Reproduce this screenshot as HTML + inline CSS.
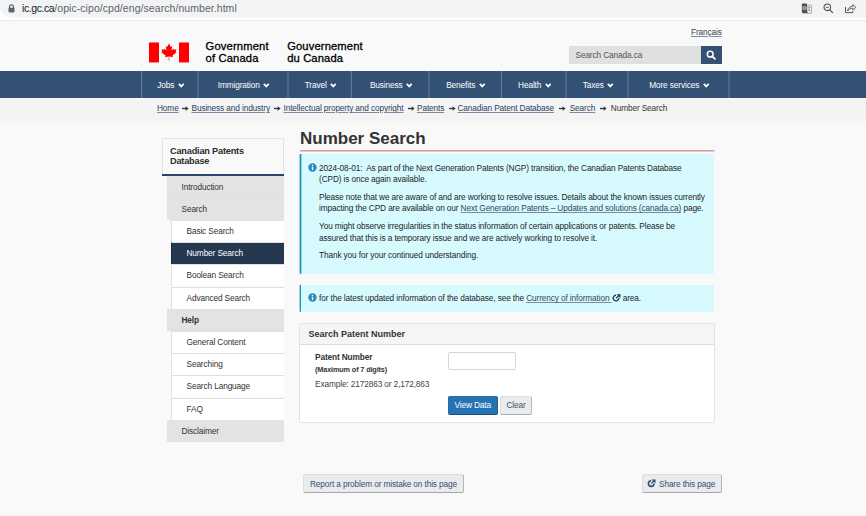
<!DOCTYPE html>
<html><head><meta charset="utf-8">
<style>
*{box-sizing:border-box;margin:0;padding:0}
html,body{width:866px;height:516px;overflow:hidden;background:#f9f9f9;font-family:"Liberation Sans",sans-serif;color:#333}
.a{position:absolute;white-space:nowrap}
#bar{position:absolute;left:0;top:0;width:866px;height:20px;background:#fff}
#pill{position:absolute;left:-1px;top:-12px;width:900px;height:29px;box-shadow:0 1px 0 #f8f9f9;border-radius:15px;background:#f1f3f4}
#barline{position:absolute;left:0;top:20px;width:866px;height:1px;background:#e8eaea}
#url{left:22px;top:1px;font-size:10.5px;line-height:14px;color:#5f6368}
#url b{font-weight:400;color:#202124;letter-spacing:-0.42px}#url i{font-style:normal;letter-spacing:0.06px}
#hdr{position:absolute;left:0;top:21px;width:866px;height:50px;background:#f9f9f9}
#nav{position:absolute;left:0;top:71px;width:866px;height:27px;background:#335075}
.sep{position:absolute;top:71px;width:1px;height:27px;background:#7d8ca0}
.ni{position:absolute;top:72px;height:27px;line-height:27px;padding-left:1.4px;font-size:8.3px;letter-spacing:-0.13px;color:#fff;text-align:center}
.chev{display:inline-block;width:6.5px;height:4.6px;margin-left:3.5px;vertical-align:0.5px}
#bc{position:absolute;left:0;top:99px;width:866px;height:22px;background:#f4f4f4}
.bcl{font-size:8.3px;letter-spacing:-0.13px;color:#284162;text-decoration:underline;text-decoration-color:#7d8ba0;top:103.2px;line-height:10px}
.arr{font-size:8.3px;letter-spacing:-0.13px;top:103px;line-height:10px;color:#333}
#side{position:absolute;left:162px;top:138px;width:122.2px;height:36px;background:#f9f9f9;border:1px solid #e3e3e3;border-bottom:none}
#sideb{position:absolute;left:162px;top:173.7px;width:122.2px;height:2.2px;background:#284570}
.row{position:absolute;height:22.2px;line-height:23px;font-size:8.3px;letter-spacing:-0.13px;color:#333;padding-left:0}
.g{left:167px;width:117px;background:#e3e3e3}
.w{left:171px;width:113px;line-height:21.5px;background:#fff;border-left:1px solid #e2e2e2;border-top:1px solid #e0e0e0}
.sel{background:#24384f;color:#fff;border-color:#1c2a3b;border-top-color:#e0e0e0}
.alert{position:absolute;left:301px;width:413.3px;background:#d7faff}
.at{position:absolute;left:319px;font-size:8.3px;letter-spacing:-0.13px;line-height:11.5px;color:#1e1e1e;white-space:nowrap}
.icon{position:absolute;width:8px;height:8px;border-radius:50%;background:#2a8bbd}
.lnk{color:#34465e;text-decoration:underline;text-decoration-color:#7d8ba0}
#panel{position:absolute;left:299px;top:323px;width:416px;height:100px;background:#fff;border:1px solid #e3e3e3;border-radius:2px}
#ph{position:absolute;left:0;top:0;width:414px;height:21px;background:#f5f5f5;border-bottom:1px solid #ddd}
.btn{position:absolute;font-size:8.3px;letter-spacing:-0.13px;text-align:center;border-radius:2px}
</style></head><body>
<div id="bar"></div><div id="pill"></div><div id="barline"></div>
<svg class="a" style="left:8px;top:4px" width="7" height="9" viewBox="0 0 7 9"><path d="M1.5 4V2.8a2 2 0 0 1 4 0V4" fill="none" stroke="#5f6368" stroke-width="1.2"/><rect x="0.5" y="3.8" width="6" height="4.6" rx="0.8" fill="#5f6368"/></svg>
<div id="url" class="a"><b>ic.gc.ca</b><i>/opic-cipo/cpd/eng/search/number.html</i></div>
<!-- toolbar icons -->
<svg class="a" style="left:798px;top:1px" width="18" height="15" viewBox="0 0 18 15"><rect x="8.9" y="4.2" width="4.6" height="8.2" rx="0.8" fill="#f4f4f4" stroke="#9a9a9a" stroke-width="0.8"/><path d="M9.9 6.2h2.6M11.2 6.2c0 2.1-.5 3.4-1.6 4.3M10.4 8c.6 1.1 1.4 1.9 2.2 2.4" fill="none" stroke="#808080" stroke-width="0.75"/><path d="M4.9 2.6h3.1a1 1 0 0 1 1 1v7.1l.9 1.5H4.9a1 1 0 0 1-1-1V3.6a1 1 0 0 1 1-1z" fill="#505050"/><circle cx="6.5" cy="7" r="1.6" fill="none" stroke="#e8e8e8" stroke-width="0.8"/><path d="M6.6 7h1.5" stroke="#e8e8e8" stroke-width="0.7"/></svg>
<svg class="a" style="left:822px;top:2px" width="13" height="13" viewBox="0 0 13 13"><circle cx="5.3" cy="5.3" r="3.3" fill="none" stroke="#4a4a4a" stroke-width="1.05"/><path d="M3.9 5.3h2.8" stroke="#4a4a4a" stroke-width="0.9"/><path d="M7.8 7.8l3 3" stroke="#4a4a4a" stroke-width="1.2"/></svg>
<svg class="a" style="left:844px;top:2px" width="13" height="13" viewBox="0 0 13 13"><path d="M1.5 5v5.6h7.3V9.2" fill="none" stroke="#555" stroke-width="1"/><path d="M3.6 9c.3-3.2 2.4-4.6 5.2-4.6V2.6l3 2.7-3 2.8V6.3c-2.2 0-3.9.8-5.2 2.7z" fill="none" stroke="#555" stroke-width="0.9" stroke-linejoin="round"/></svg>

<div id="hdr"></div>
<a class="a lnk" style="left:691px;top:27px;font-size:8.3px;letter-spacing:-0.13px;line-height:10px">Français</a>
<!-- flag -->
<svg class="a" style="left:149px;top:42px" width="40" height="21" viewBox="0 -0.45 40 21"><rect x="0" y="0" width="10" height="20" fill="#f00"/><rect x="30" y="0" width="10" height="20" fill="#f00"/><path fill="#f00" transform="translate(20 9.5) scale(0.00417)" d="M-90 2030L-45 1165Q-45 1120-95 1120L-959 1273L-826 908Q-816 880-836 874L-1845 85L-1618-32Q-1590-45-1602-70L-1795-644L-1226-527Q-1200-525-1194-547L-1081-821L-638-330Q-600-310-586-353L-786-1419L-455-1217Q-425-1200-412-1230L0-2000L412-1230Q425-1200 455-1217L786-1419L586-353Q600-310 638-330L1081-821L1194-547Q1200-525 1226-527L1795-644L1602-70Q1590-45 1618-32L1845 85L836 874Q816 880 826 908L959 1273L95 1120Q45 1120 45 1165L90 2030z"/></svg>
<div class="a" style="left:205.6px;top:41.3px;font-size:11.2px;line-height:11.3px;color:#000;letter-spacing:0.15px;-webkit-text-stroke:0.3px #000">Government<br>of Canada</div>
<div class="a" style="left:287.2px;top:41.3px;font-size:11.2px;line-height:11.3px;color:#000;letter-spacing:0.13px;-webkit-text-stroke:0.3px #000">Gouvernement<br>du Canada</div>
<!-- search -->
<div class="a" style="left:569px;top:45.5px;width:131.5px;height:18.5px;background:#e0e0e0"></div>
<div class="a" style="left:575.5px;top:50px;font-size:8.3px;letter-spacing:-0.13px;line-height:10px;color:#555">Search Canada.ca</div>
<div class="a" style="left:700.5px;top:45.5px;width:21.5px;height:18.5px;background:#335075"></div>
<svg class="a" style="left:706px;top:50px" width="10" height="10" viewBox="0 0 10 10"><circle cx="4.2" cy="4.2" r="2.9" fill="none" stroke="#fff" stroke-width="1.5"/><path d="M6.3 6.3l2.6 2.6" stroke="#fff" stroke-width="1.8" stroke-linecap="round"/></svg>

<!-- nav -->
<div id="nav"></div>
<svg class="a" style="left:0;top:71px" width="866" height="27"><rect x="141.16" y="0" width="1" height="27" fill="#6e7d93"/><rect x="197.50" y="0" width="1" height="27" fill="#6e7d93"/><rect x="287.50" y="0" width="1" height="27" fill="#6e7d93"/><rect x="350.83" y="0" width="1" height="27" fill="#6e7d93"/><rect x="428.50" y="0" width="1" height="27" fill="#6e7d93"/><rect x="500.93" y="0" width="1" height="27" fill="#6e7d93"/><rect x="565.60" y="0" width="1" height="27" fill="#6e7d93"/><rect x="627.40" y="0" width="1" height="27" fill="#6e7d93"/><rect x="728.50" y="0" width="1" height="27" fill="#6e7d93"/></svg>
<div class="ni" style="left:142px;width:56px">Jobs<svg class="chev" viewBox="0 0 6.5 4.6"><path d="M.8.8L3.25 3.4 5.7.8" fill="none" stroke="#fff" stroke-width="1.7"/></svg></div>
<div class="ni" style="left:198px;width:90px">Immigration<svg class="chev" viewBox="0 0 6.5 4.6"><path d="M.8.8L3.25 3.4 5.7.8" fill="none" stroke="#fff" stroke-width="1.7"/></svg></div>
<div class="ni" style="left:288px;width:64px">Travel<svg class="chev" viewBox="0 0 6.5 4.6"><path d="M.8.8L3.25 3.4 5.7.8" fill="none" stroke="#fff" stroke-width="1.7"/></svg></div>
<div class="ni" style="left:352px;width:77px">Business<svg class="chev" viewBox="0 0 6.5 4.6"><path d="M.8.8L3.25 3.4 5.7.8" fill="none" stroke="#fff" stroke-width="1.7"/></svg></div>
<div class="ni" style="left:429px;width:72px">Benefits<svg class="chev" viewBox="0 0 6.5 4.6"><path d="M.8.8L3.25 3.4 5.7.8" fill="none" stroke="#fff" stroke-width="1.7"/></svg></div>
<div class="ni" style="left:501px;width:66px">Health<svg class="chev" viewBox="0 0 6.5 4.6"><path d="M.8.8L3.25 3.4 5.7.8" fill="none" stroke="#fff" stroke-width="1.7"/></svg></div>
<div class="ni" style="left:567px;width:61px">Taxes<svg class="chev" viewBox="0 0 6.5 4.6"><path d="M.8.8L3.25 3.4 5.7.8" fill="none" stroke="#fff" stroke-width="1.7"/></svg></div>
<div class="ni" style="left:628px;width:101px">More services<svg class="chev" viewBox="0 0 6.5 4.6"><path d="M.8.8L3.25 3.4 5.7.8" fill="none" stroke="#fff" stroke-width="1.7"/></svg></div>

<!-- breadcrumb -->
<div id="bc"></div>
<a class="a bcl" style="left:157px">Home</a>
<a class="a bcl" style="left:191.5px">Business and industry</a>
<a class="a bcl" style="left:283.5px">Intellectual property and copyright</a>
<a class="a bcl" style="left:417px">Patents</a>
<a class="a bcl" style="left:457.5px">Canadian Patent Database</a>
<a class="a bcl" style="left:569.7px">Search</a>
<div class="a bcl" style="left:610.8px;color:#333;text-decoration:none">Number Search</div>
<svg class="a" style="left:182px;top:106px" width="7" height="5" viewBox="0 0 7 5"><path d="M0 2.5h4.2" stroke="#333" stroke-width="1.3"/><path d="M3.6 0.2L6.6 2.5 3.6 4.8z" fill="#333"/></svg>
<svg class="a" style="left:274px;top:106px" width="7" height="5" viewBox="0 0 7 5"><path d="M0 2.5h4.2" stroke="#333" stroke-width="1.3"/><path d="M3.6 0.2L6.6 2.5 3.6 4.8z" fill="#333"/></svg>
<svg class="a" style="left:408px;top:106px" width="7" height="5" viewBox="0 0 7 5"><path d="M0 2.5h4.2" stroke="#333" stroke-width="1.3"/><path d="M3.6 0.2L6.6 2.5 3.6 4.8z" fill="#333"/></svg>
<svg class="a" style="left:448.5px;top:106px" width="7" height="5" viewBox="0 0 7 5"><path d="M0 2.5h4.2" stroke="#333" stroke-width="1.3"/><path d="M3.6 0.2L6.6 2.5 3.6 4.8z" fill="#333"/></svg>
<svg class="a" style="left:559px;top:106px" width="7" height="5" viewBox="0 0 7 5"><path d="M0 2.5h4.2" stroke="#333" stroke-width="1.3"/><path d="M3.6 0.2L6.6 2.5 3.6 4.8z" fill="#333"/></svg>
<svg class="a" style="left:599.5px;top:106px" width="7" height="5" viewBox="0 0 7 5"><path d="M0 2.5h4.2" stroke="#333" stroke-width="1.3"/><path d="M3.6 0.2L6.6 2.5 3.6 4.8z" fill="#333"/></svg>

<!-- sidebar -->
<div id="side"></div>
<div class="a" style="left:170px;top:145.6px;font-size:9.2px;letter-spacing:-0.2px;line-height:10.7px;font-weight:700;color:#2b2b2b">Canadian Patents<br>Database</div>
<div id="sideb"></div>
<div class="row g" style="top:175.5px;padding-left:14.5px;">Introduction</div>
<div class="row g" style="top:197.7px;padding-left:14.5px;border-top:1px solid #dfdfdf;line-height:21px;">Search</div>
<div class="row w" style="top:219.9px;padding-left:14.5px;">Basic Search</div>
<div class="row w sel" style="top:242.1px;padding-left:14.5px;">Number Search</div>
<div class="row w" style="top:264.3px;padding-left:14.5px;">Boolean Search</div>
<div class="row w" style="top:286.5px;padding-left:14.5px;">Advanced Search</div>
<div class="row g" style="top:308.7px;padding-left:14.5px;font-weight:700;">Help</div>
<div class="row w" style="top:330.9px;padding-left:14.5px;">General Content</div>
<div class="row w" style="top:353.1px;padding-left:14.5px;">Searching</div>
<div class="row w" style="top:375.3px;padding-left:14.5px;">Search Language</div>
<div class="row w" style="top:397.5px;padding-left:14.5px;">FAQ</div>
<div class="row g" style="top:419.7px;padding-left:14.5px;">Disclaimer</div>

<!-- main -->
<div class="a" style="left:300px;top:128.5px;font-size:17px;line-height:20px;font-weight:700;color:#333">Number Search</div>
<svg class="a" style="left:0;top:0" width="720" height="160"><rect x="300" y="150.1" width="414.3" height="1.4" fill="#d39599"/></svg>

<div class="alert" style="top:154px;height:119.8px"></div><svg class="a" style="left:0;top:0" width="400" height="320"><rect x="299.6" y="154" width="1.8" height="119.8" fill="#1f93b8"/><rect x="299.6" y="285" width="1.8" height="26.8" fill="#1f93b8"/></svg>
<svg class="a" style="left:307.5px;top:162.5px" width="9" height="9" viewBox="0 0 9 9"><circle cx="4.5" cy="4.5" r="4.2" fill="#2a8bbd"/><circle cx="4.5" cy="2.4" r="0.75" fill="#fff"/><path d="M4.5 3.8v3.3" stroke="#fff" stroke-width="1.3"/></svg>
<div class="at" style="top:162.5px">2024-08-01:&nbsp; As part of the Next Generation Patents (NGP) transition, the Canadian Patents Database<br>(CPD) is once again available.</div>
<div class="at" style="top:191.8px">Please note that we are aware of and are working to resolve issues. Details about the known issues currently<br>impacting the CPD are available on our <span class="lnk">Next Generation Patents – Updates and solutions (canada.ca)</span> page.</div>
<div class="at" style="top:221px">You might observe irregularities in the status information of certain applications or patents. Please be<br>assured that this is a temporary issue and we are actively working to resolve it.</div>
<div class="at" style="top:250.3px">Thank you for your continued understanding.</div>

<div class="alert" style="top:285px;height:26.8px"></div>
<svg class="a" style="left:307.5px;top:293.3px" width="9" height="9" viewBox="0 0 9 9"><circle cx="4.5" cy="4.5" r="4.2" fill="#2a8bbd"/><circle cx="4.5" cy="2.4" r="0.75" fill="#fff"/><path d="M4.5 3.8v3.3" stroke="#fff" stroke-width="1.3"/></svg>
<div class="at" style="top:293.4px">for the latest updated information of the database, see the <span class="lnk">Currency of information </span>&#8203;<svg width="9" height="8" viewBox="0 0 9 8" style="vertical-align:-1px"><path d="M4 1.3A2.8 2.8 0 1 0 6.8 4" fill="none" stroke="#284162" stroke-width="1.4"/><path d="M4.5 0.3h4v4z" fill="#284162"/><path d="M4 4.2L7.8 0.8" stroke="#284162" stroke-width="1.2"/></svg> area.</div>

<div id="panel"><div id="ph"></div></div>
<div class="a" style="left:308.5px;top:328.5px;font-size:9px;line-height:10px;font-weight:700;color:#333">Search Patent Number</div>
<div class="a" style="left:315px;top:352px;font-size:8.3px;letter-spacing:-0.13px;line-height:10px;font-weight:700;color:#333">Patent Number</div>
<div class="a" style="left:315px;top:364.5px;font-size:7.3px;letter-spacing:-0.14px;line-height:9px;font-weight:700;color:#333">(Maximum of 7 digits)</div>
<div class="a" style="left:315px;top:379px;font-size:8.3px;letter-spacing:-0.13px;line-height:10px;color:#444">Example: 2172863 or 2,172,863</div>
<div class="a" style="left:448px;top:352px;width:68px;height:18px;background:#fff;border:1px solid #d6d6d6;border-radius:2px"></div>
<div class="btn" style="left:448px;top:396px;width:49.5px;height:19px;line-height:17px;background:#2572b4;border:1px solid #2a6aa6;border-bottom-color:#1a4f80;border-right-color:#1f5a90;color:#fff">View Data</div>
<div class="btn" style="left:500px;top:396px;width:32px;height:19px;line-height:17px;background:#eaebed;border:1px solid #dcdee1;border-right-color:#b5b9be;border-bottom-color:#a9adb2;color:#44536a">Clear</div>

<!-- footer buttons -->
<div class="btn" style="left:303px;top:474px;width:161px;height:18.5px;line-height:18.6px;background:#eaebed;border:1px solid #dcdee1;border-right-color:#b0b4b9;border-bottom-color:#a5a9ae;color:#335075">Report a problem or mistake on this page</div>
<div class="btn" style="left:642px;top:474px;width:80px;height:18.5px;line-height:18.6px;background:#eaebed;border:1px solid #dcdee1;border-right-color:#b0b4b9;border-bottom-color:#a5a9ae;color:#335075;text-align:left;padding-left:16px">Share this page</div>
<svg class="a" style="left:647px;top:479px" width="9" height="9" viewBox="0 0 9 9"><path d="M4.2 1.8A2.8 2.8 0 1 0 7 4.6" fill="none" stroke="#335075" stroke-width="1.6"/><path d="M4.5 0.5h4v4z" fill="#335075"/><path d="M4.2 4.6L8 1" stroke="#335075" stroke-width="1.3"/></svg>
</body></html>
